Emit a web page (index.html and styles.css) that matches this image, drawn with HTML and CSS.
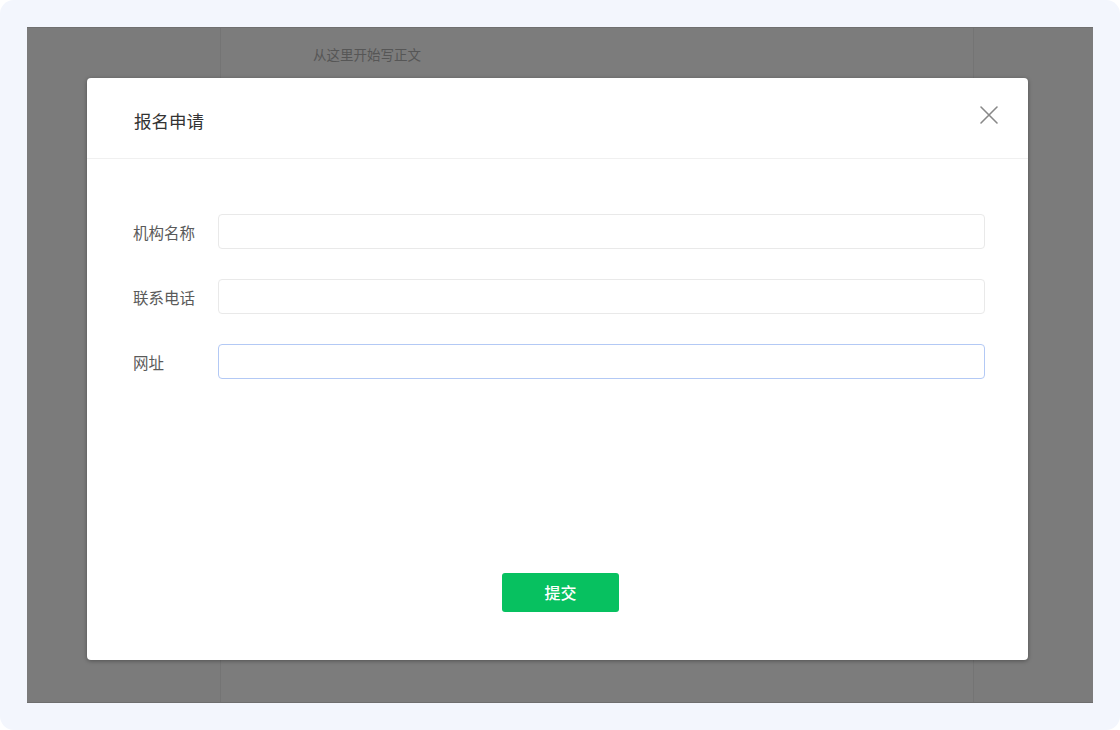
FILE: index.html
```html
<!DOCTYPE html>
<html lang="zh-CN">
<head>
<meta charset="utf-8">
<title>报名申请</title>
<link rel="stylesheet" href="styles.css">
</head>
<body>
<div class="frame">
  <div class="editor">
    <div class="side"></div>
    <div class="page"><p class="placeholder">从这里开始写正文</p></div>
    <div class="side"></div>
    <div class="modal">
      <div class="modal-header">
        <h2 class="modal-title">报名申请</h2>
        <button class="close" aria-label="关闭">
          <svg width="20" height="20" viewBox="0 0 20 20"><path d="M2 2 L18 18 M18 2 L2 18" stroke="#888" stroke-width="1.6" fill="none" stroke-linecap="round"/></svg>
        </button>
      </div>
      <div class="modal-body">
        <div class="form">
          <label class="label">机构名称</label>
          <input class="input" type="text">
          <label class="label">联系电话</label>
          <input class="input" type="text">
          <label class="label">网址</label>
          <input class="input focus" type="text">
        </div>
      </div>
      <div class="modal-footer">
        <button class="submit">提交</button>
      </div>
    </div>
  </div>
</div>
</body>
</html>
```

FILE: styles.css
```css
html, body {
  margin: 0;
  padding: 0;
  background: #ffffff;
  font-family: "Noto Sans CJK SC", "Noto Sans", sans-serif;
}
.frame {
  width: 1120px;
  height: 730px;
  box-sizing: border-box;
  padding: 27px;
  background: #f3f6fd;
  border-radius: 14px;
}
.editor {
  position: relative;
  height: 676px;
  display: grid;
  grid-template-columns: 193px 1fr 119px;
  background: #7b7b7b;
  border-top: 1px solid #707070;
  border-bottom: 1px solid #6e6e6e;
  box-sizing: border-box;
}
.page {
  border-left: 1px solid #747474;
  border-right: 1px solid #747474;
  background: #7c7c7c;
  padding: 16px 0 0 92px;
}
.placeholder {
  margin: 0;
  font-size: 13.5px;
  color: #565656;
}
.modal {
  position: absolute;
  left: 60px;
  top: 50px;
  width: 941px;
  height: 582px;
  background: #ffffff;
  border-radius: 4px;
  box-shadow: 0 1px 4px rgba(0,0,0,0.35);
  display: flex;
  flex-direction: column;
}
.modal-header {
  height: 81px;
  box-sizing: border-box;
  border-bottom: 1px solid #f0f0f0;
  display: flex;
  align-items: center;
  justify-content: space-between;
  padding: 4px 29px 0 47px;
}
.modal-title {
  margin: 0;
  font-size: 17.5px;
  font-weight: 400;
  color: #333333;
}
.close {
  border: 0;
  background: none;
  padding: 0;
  width: 20px;
  height: 20px;
  margin-top: -11px;
  cursor: pointer;
}
.close svg { display: block; }
.modal-body {
  padding: 55px 43px 0 46px;
}
.form {
  display: grid;
  grid-template-columns: 85px 1fr;
  row-gap: 30px;
  align-items: center;
}
.label {
  font-size: 15.5px;
  color: #5a5a5a;
}
.input {
  height: 35px;
  box-sizing: border-box;
  border: 1px solid #e9e9e9;
  border-radius: 4px;
  outline: none;
  font-size: 14px;
  background: #fff;
}
.input.focus {
  border-color: #b3c9f5;
}
.modal-footer {
  margin-top: auto;
  padding: 0 0 48px 6px;
  display: flex;
  justify-content: center;
}
.submit {
  width: 117px;
  height: 39px;
  border: 0;
  border-radius: 3px;
  background: #07c160;
  color: #ffffff;
  font-family: "Noto Sans CJK SC", sans-serif;
  font-size: 16px;
  font-weight: 500;
  padding-bottom: 3px;
}
```
